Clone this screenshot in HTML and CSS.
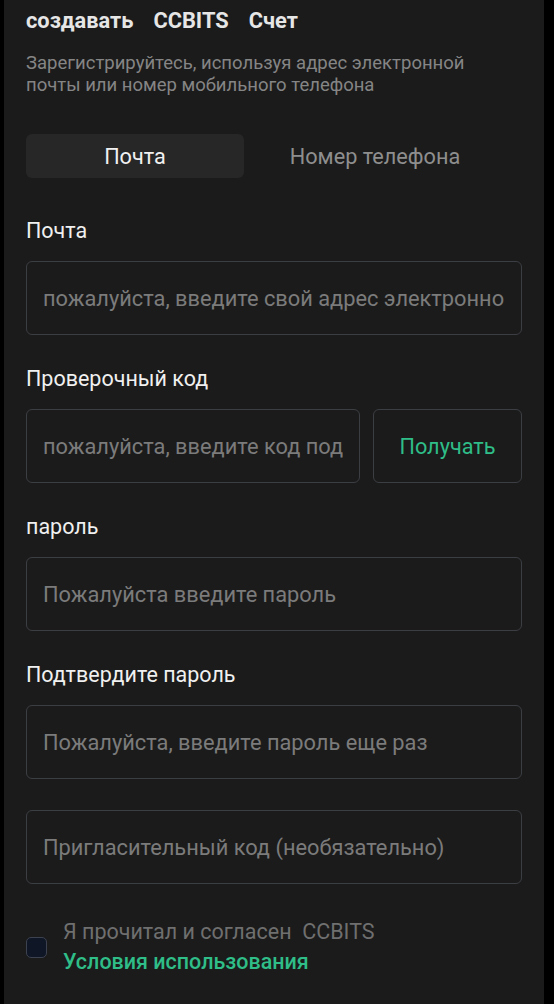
FILE: index.html
```html
<!DOCTYPE html>
<html lang="ru">
<head>
<meta charset="utf-8">
<link rel="stylesheet" href="styles.css">
</head>
<body>
<div class="page">
  <h1 class="title"><span>создавать</span><span>CCBITS</span><span>Счет</span></h1>
  <p class="subtitle">Зарегистрируйтесь, используя адрес электронной почты или номер мобильного телефона</p>
  <div class="tabs">
    <div class="tab active">Почта</div>
    <div class="tab">Номер телефона</div>
  </div>
  <div class="label">Почта</div>
  <div class="field"><span class="ph">пожалуйста, введите свой адрес электронной почты</span></div>
  <div class="label">Проверочный код</div>
  <div class="row">
    <div class="field grow"><span class="ph">пожалуйста, введите код подтверждения</span></div>
    <div class="btn">Получать</div>
  </div>
  <div class="label">пароль</div>
  <div class="field"><span class="ph">Пожалуйста введите пароль</span></div>
  <div class="label">Подтвердите пароль</div>
  <div class="field"><span class="ph">Пожалуйста, введите пароль еще раз</span></div>
  <div class="field invite"><span class="ph">Пригласительный код (необязательно)</span></div>
  <div class="agree">
    <div class="check"></div>
    <div class="agree-text">
      <div class="grey">Я прочитал и согласен&nbsp; CCBITS</div>
      <div class="link">Условия использования</div>
    </div>
  </div>
</div>
</body>
</html>
```
FILE: styles.css
```css
html, body {
  margin: 0;
  padding: 0;
  background: #000;
}
body {
  font-family: Roboto, "Noto Sans", sans-serif;
  width: 554px;
  height: 1004px;
  overflow: hidden;
}
.page {
  margin-left: 4px;
  width: 540px;
  height: 1004px;
  background: #1b1b1b;
  box-sizing: border-box;
  padding: 7px 22px 0 22px;
}
.title {
  margin: 0;
  font-size: 21.8px;
  font-weight: 700;
  line-height: 28px;
  color: #e6e6e6;
  display: flex;
  gap: 20px;
}
.subtitle {
  margin: 17px 0 0 0;
  font-size: 18.5px;
  line-height: 22px;
  color: #858585;
}
.tabs {
  margin-top: 38px;
  display: flex;
  height: 44px;
}
.tab {
  display: flex;
  align-items: center;
  justify-content: center;
  font-size: 21.7px;
  color: #8e8e8e;
  border-radius: 6px;
  width: 262px;
}
.tab.active {
  width: 218px;
  background: #272727;
  color: #f0f0f0;
}
.label {
  font-size: 21.5px;
  line-height: 26px;
  color: #f0f0f0;
  margin-top: 31px;
  margin-bottom: 17px;
}
.tabs + .label {
  margin-top: 40px;
}
.field {
  box-sizing: border-box;
  height: 74px;
  border: 1px solid #3b3e43;
  border-radius: 6px;
  display: flex;
  align-items: center;
  padding: 0 16px;
  overflow: hidden;
  white-space: nowrap;
}
.ph {
  font-size: 21.8px;
  color: #7b7b7b;
  overflow: hidden;
}
.row {
  display: flex;
  gap: 13px;
}
.grow {
  flex: 1;
  min-width: 0;
}
.btn {
  box-sizing: border-box;
  width: 149px;
  height: 74px;
  border: 1px solid #3b3e43;
  border-radius: 6px;
  display: flex;
  align-items: center;
  justify-content: center;
  font-size: 21.7px;
  color: #2fbd88;
}
.invite {
  margin-top: 31px;
}
.agree {
  margin-top: 33px;
  display: flex;
  align-items: center;
  gap: 16px;
}
.check {
  width: 21px;
  height: 21px;
  box-sizing: border-box;
  border: 1px solid #3d4250;
  border-radius: 5px;
  background: #0f1626;
}
.agree-text {
  font-size: 21.5px;
  line-height: 30px;
}
.grey {
  color: #6f6f6f;
}
.link {
  color: #2fbd88;
  font-weight: 500;
}
```
